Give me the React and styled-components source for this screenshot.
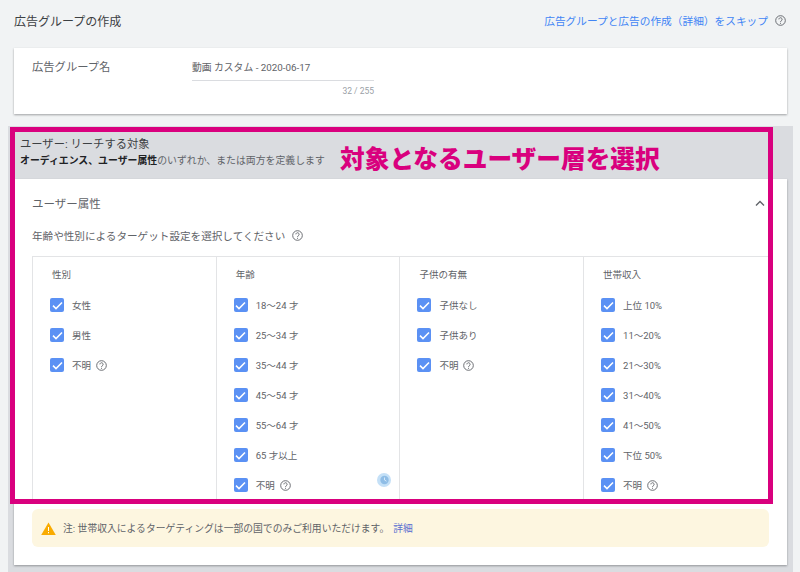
import styled, { createGlobalStyle } from 'styled-components';

const GlobalStyle = createGlobalStyle`
    html, body {
        margin: 0;
        padding: 0;
        background: #f1f3f4;
    }
    body {
        font-family: Roboto, "Noto Sans CJK JP", sans-serif;
        color: #3c4043;
    }
`;
const Page = styled.div`
    position: relative;
    width: 800px;
    height: 572px;
    overflow: hidden;
    background: #f1f3f4;
`;
const TopBar = styled.div`
    display: flex;
    justify-content: space-between;
    align-items: center;
    height: 40px;
    margin-bottom: 8px;
    padding: 0 14px;
`;
const PageTitle = styled.div`
    font-size: 12px;
    color: #3c4043;
`;
const TopRight = styled.div`
    display: flex;
    align-items: center;
    gap: 7px;
`;
const SkipLink = styled.a`
    font-size: 10.7px;
    color: #4285f4;
`;
const NameCard = styled.div`
    display: flex;
    box-sizing: border-box;
    height: 66px;
    margin: 0 13px 0 14px;
    padding: 0 18px;
    background: #fff;
    box-shadow: 0 1px 2px rgba(60, 64, 67, 0.45);
`;
const NameLabel = styled.div`
    width: 160px;
    padding-top: 11px;
    font-size: 11.3px;
    line-height: 18px;
    color: #5f6368;
`;
const NameField = styled.div`
    width: 182px;
    padding-top: 12px;
`;
const NameValue = styled.div`
    height: 20px;
    border-bottom: 1px solid #dadce0;
    font-size: 9.8px;
    line-height: 16px;
    color: #5f6368;
`;
const Counter = styled.div`
    margin-top: 4px;
    text-align: right;
    font-size: 8.5px;
    line-height: 12px;
    color: #9aa0a6;
`;
const Section = styled.div`
    margin: 12px 7px 0 8px;
    background: #dadce0;
    height: 460px;
`;
const SectionHead = styled.div`
    box-sizing: border-box;
    height: 53px;
    padding: 10px 12px 0;
`;
const SectionTitle = styled.div`
    font-size: 11.3px;
    line-height: 17px;
    color: #3c4043;
`;
const SectionText = styled.div`
    margin-top: 1px;
    font-size: 9.9px;
    line-height: 14px;
    color: #5f6368;
    white-space: nowrap;
    b {
        color: #202124;
        font-weight: 700;
    }
`;
const Card = styled.div`
    box-sizing: border-box;
    height: 386px;
    margin: 0 6px;
    padding: 0 19px 0 18px;
    background: #fff;
    box-shadow: 0 1px 2px rgba(60, 64, 67, 0.45);
`;
const CardHead = styled.div`
    display: flex;
    justify-content: space-between;
    align-items: center;
    height: 48px;
    font-size: 11.5px;
    color: #5f6368;
`;
const Chevron = styled.svg`
    margin-right: 3px;
`;
const Hint = styled.div`
    display: flex;
    align-items: center;
    gap: 7px;
    height: 18px;
    margin: -1px 0 12px;
    font-size: 10.6px;
    color: #5f6368;
`;
const Table = styled.div`
    display: grid;
    grid-template-columns: repeat(4, 183.7px);
    box-sizing: border-box;
    height: 243px;
    overflow: hidden;
    border-top: 1px solid #e3e4e6;
`;
const Col = styled.div`
    position: relative;
    padding: 11px 0 0 17px;
    border-left: 1px solid #e3e4e6;
`;
const ColTitle = styled.div`
    margin: 0 0 8px 2px;
    font-size: 9.5px;
    line-height: 14px;
    color: #5f6368;
`;
const Row = styled.div`
    display: flex;
    align-items: center;
    height: 30px;
    font-size: 9.5px;
    color: #5f6368;
`;
const Check = styled.span`
    display: flex;
    align-items: center;
    justify-content: center;
    flex: none;
    width: 14px;
    height: 14px;
    margin-right: 8px;
    border-radius: 2px;
    background: #5b91f4;
`;
const RowHelp = styled.span`
    display: flex;
    margin-left: 5px;
`;
const ClockBadge = styled.span`
    position: absolute;
    left: 160px;
    top: 216px;
    display: flex;
`;
const Note = styled.div`
    display: flex;
    align-items: center;
    gap: 7px;
    box-sizing: border-box;
    width: 737px;
    height: 38px;
    margin-top: 10px;
    padding-left: 9px;
    border-radius: 6px;
    background: #fdf6e0;
    font-size: 9.8px;
    color: #5f6368;
`;
const NoteLink = styled.a`
    margin-left: 4px;
    color: #5a6fd0;
`;
const Highlight = styled.div`
    position: absolute;
    left: 10px;
    top: 127px;
    box-sizing: border-box;
    width: 763px;
    height: 377px;
    padding: 8px 0 0 325px;
    border: 5.5px solid #d9007e;
`;
const HighlightText = styled.div`
    font-family: "Noto Sans CJK JP", sans-serif;
    font-size: 24.7px;
    line-height: 34px;
    font-weight: 900;
    color: #d9007e;
    white-space: nowrap;
`;

function HelpIcon({ size = 11 }) {
    return (
        <svg width={size} height={size} viewBox="0 0 24 24" fill="none" stroke="#5f6368" strokeWidth="2">
            <circle cx="12" cy="12" r="10.5" />
            <path d="M8.5 9.5a3.5 3.5 0 1 1 5.6 2.8c-1.3 1-2.1 1.6-2.1 3.2" />
            <path d="M12 17.2v2" />
        </svg>
    );
}

function CheckBox() {
    return (
        <Check>
            <svg width="11" height="9" viewBox="0 0 11 9" fill="none" stroke="#fff" strokeWidth="1.5">
                <path d="M1 4.6l3 3L10 1.4" />
            </svg>
        </Check>
    );
}

const columns = [
    { title: '性別', rows: ['女性', '男性', '不明?'] },
    {
        title: '年齢',
        rows: ['18〜24 才', '25〜34 才', '35〜44 才', '45〜54 才', '55〜64 才', '65 才以上', '不明?'],
        clock: true,
    },
    { title: '子供の有無', rows: ['子供なし', '子供あり', '不明?'] },
    {
        title: '世帯収入',
        rows: ['上位 10%', '11〜20%', '21〜30%', '31〜40%', '41〜50%', '下位 50%', '不明?'],
    },
];

export default function App() {
    return (
        <Page>
            <GlobalStyle />
            <TopBar>
                <PageTitle>広告グループの作成</PageTitle>
                <TopRight>
                    <SkipLink>広告グループと広告の作成（詳細）をスキップ</SkipLink>
                    <HelpIcon />
                </TopRight>
            </TopBar>
            <NameCard>
                <NameLabel>広告グループ名</NameLabel>
                <NameField>
                    <NameValue>動画 カスタム - 2020-06-17</NameValue>
                    <Counter>32 / 255</Counter>
                </NameField>
            </NameCard>
            <Section>
                <SectionHead>
                    <SectionTitle>ユーザー: リーチする対象</SectionTitle>
                    <SectionText>
                        <b>オーディエンス、ユーザー属性</b>のいずれか、または両方を定義します
                    </SectionText>
                </SectionHead>
                <Card>
                    <CardHead>
                        ユーザー属性
                        <Chevron width="10" height="7" viewBox="0 0 10 7" fill="none" stroke="#5f6368" strokeWidth="1.4">
                            <path d="M1 5.5L5 1.5l4 4" />
                        </Chevron>
                    </CardHead>
                    <Hint>
                        年齢や性別によるターゲット設定を選択してください
                        <HelpIcon />
                    </Hint>
                    <Table>
                        {columns.map((col) => (
                            <Col key={col.title}>
                                <ColTitle>{col.title}</ColTitle>
                                {col.rows.map((row) => (
                                    <Row key={row}>
                                        <CheckBox />
                                        {row.replace('?', '')}
                                        {row.endsWith('?') && (
                                            <RowHelp>
                                                <HelpIcon />
                                            </RowHelp>
                                        )}
                                    </Row>
                                ))}
                                {col.clock && (
                                    <ClockBadge>
                                        <svg width="14" height="14" viewBox="0 0 14 14">
                                            <circle cx="7" cy="7" r="7" fill="#c4e0f7" />
                                            <circle cx="7.5" cy="7" r="4.2" fill="#8fbde6" />
                                            <path d="M7.5 4.5V7l2 1.2" stroke="#d5e9f9" strokeWidth="1" fill="none" />
                                        </svg>
                                    </ClockBadge>
                                )}
                            </Col>
                        ))}
                    </Table>
                    <Note>
                        <svg width="15" height="13" viewBox="0 0 15 13">
                            <path d="M7.5 0.5L14.8 13H0.2z" fill="#f9ab00" />
                            <path d="M7 5h1v4H7zM7 10h1v1.2H7z" fill="#fff" />
                        </svg>
                        <span>
                            注: 世帯収入によるターゲティングは一部の国でのみご利用いただけます。
                            <NoteLink>詳細</NoteLink>
                        </span>
                    </Note>
                </Card>
            </Section>
            <Highlight>
                <HighlightText>対象となるユーザー層を選択</HighlightText>
            </Highlight>
        </Page>
    );
}
